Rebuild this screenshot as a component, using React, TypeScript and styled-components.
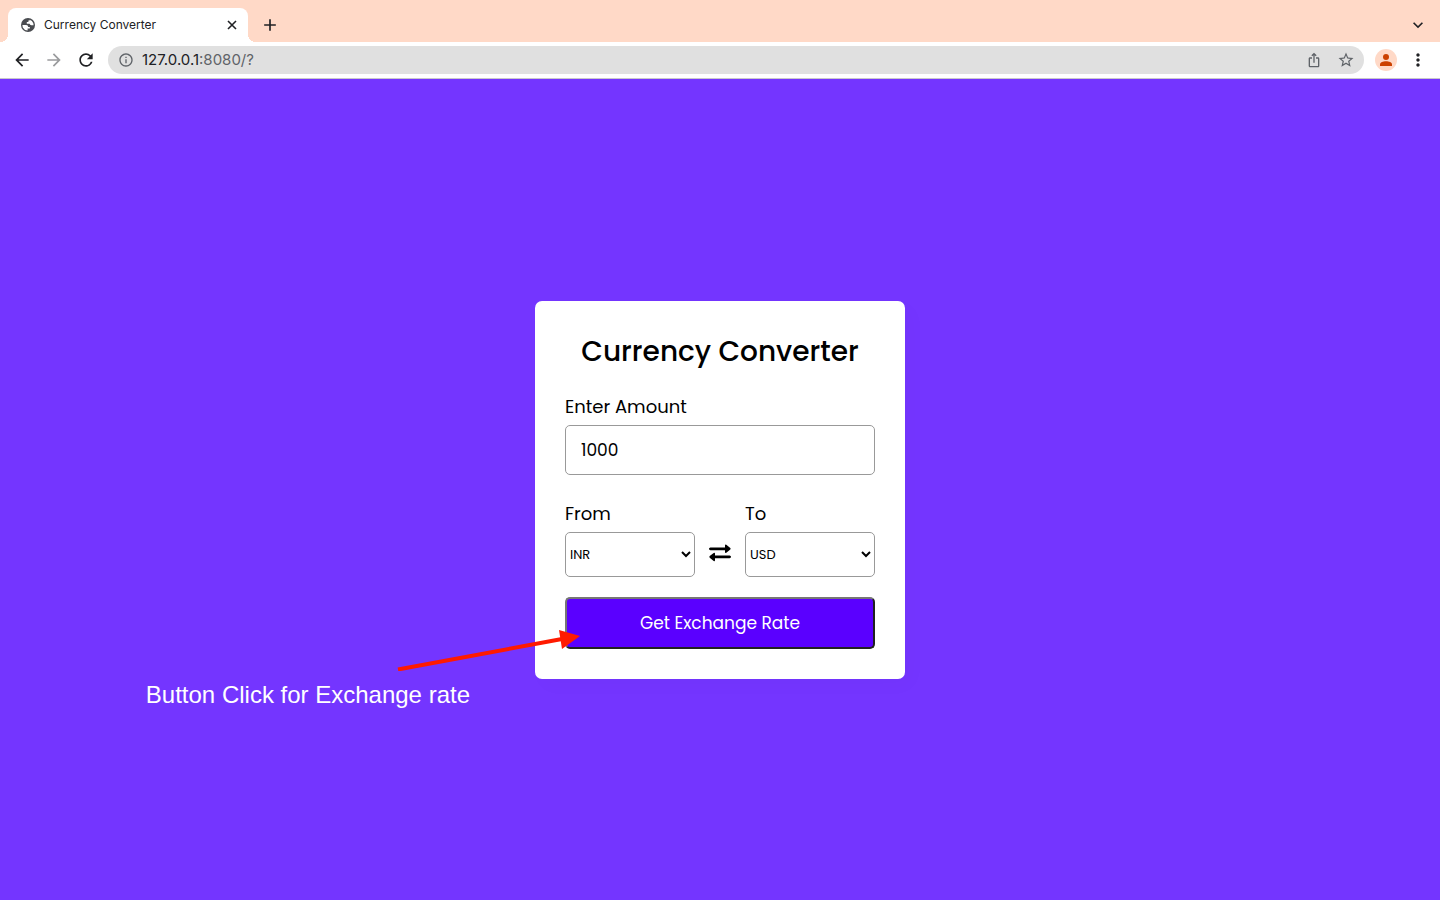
import React, { useState } from "react";
import styled, { createGlobalStyle } from "styled-components";
import {
  MdAdd,
  MdArrowBack,
  MdArrowForward,
  MdExpandMore,
  MdInfoOutline,
  MdIosShare,
  MdMoreVert,
  MdRefresh,
  MdStarBorder,
} from "react-icons/md";

const GlobalStyle = createGlobalStyle`
  * { box-sizing: border-box; margin: 0; padding: 0; }
  body { font-family: Poppins, Inter, "Liberation Sans", sans-serif; color: #000; }
`;

const Window = styled.div`
  display: flex;
  flex-direction: column;
  min-height: 100vh;
`;

const TabStrip = styled.header`
  display: flex;
  align-items: flex-end;
  height: 42px;
  padding: 0 10px 0 8px;
  background: #ffd9c7;
`;

const Tab = styled.div`
  position: relative;
  display: flex;
  align-items: center;
  width: 240px;
  height: 34px;
  padding: 0 8px 0 12px;
  border-radius: 8px 8px 0 0;
  background: #fff;
  color: #4a4c50;

  &::before,
  &::after {
    content: "";
    position: absolute;
    bottom: 0;
    width: 8px;
    height: 8px;
  }
  &::before {
    left: -8px;
    background: radial-gradient(circle at 0 0, transparent 8px, #fff 8px);
  }
  &::after {
    right: -8px;
    background: radial-gradient(circle at 100% 0, transparent 8px, #fff 8px);
  }
`;

const TabTitle = styled.span`
  flex: 1;
  margin-left: 8px;
  font: 12px/16px Inter, sans-serif;
  color: #202124;
`;

const IconButton = styled.button<{ $size: number; $color?: string }>`
  display: flex;
  align-items: center;
  justify-content: center;
  flex: none;
  width: ${(p) => p.$size}px;
  height: ${(p) => p.$size}px;
  border: 0;
  background: none;
  color: ${(p) => p.$color ?? "#202124"};
`;

const NewTab = styled.div`
  display: flex;
  align-items: center;
  flex: 1;
  justify-content: space-between;
  height: 34px;
  padding-left: 12px;
`;

const Toolbar = styled.nav`
  display: flex;
  align-items: center;
  height: 37px;
  padding: 0 12px;
  border-bottom: 1px solid #c8c6cc;
  background: #fff;
`;

const NavButtons = styled.div`
  display: flex;
  gap: 12px;
  margin-right: 12px;
`;

const AddressBar = styled.div`
  display: flex;
  align-items: center;
  flex: 1;
  height: 28px;
  padding: 0 8px 0 10px;
  border-radius: 14px;
  background: #e0e0e0;
  color: #5f6368;
`;

const Address = styled.span`
  flex: 1;
  margin-left: 8px;
  font: 15px/20px Inter, sans-serif;
  color: #5f6368;

  b { font-weight: 400; color: #202124; }
`;

const AddressActions = styled.div`
  display: flex;
  gap: 12px;
`;

const Avatar = styled.button`
  display: flex;
  align-items: center;
  justify-content: center;
  width: 22px;
  height: 22px;
  margin: 0 11px;
  border: 0;
  border-radius: 50%;
  background: #ffd9c7;
  color: #cc4100;
`;

const Page = styled.main`
  display: flex;
  flex: 1;
  align-items: center;
  justify-content: center;
  background: #7435ff;
`;

const Card = styled.section`
  position: relative;
  width: 370px;
  padding: 30px;
  border-radius: 7px;
  background: #fff;
  box-shadow: 7px 7px 20px rgba(0, 0, 0, 0.02);
`;

const Title = styled.h1`
  font-size: 28px;
  font-weight: 500;
  line-height: 42px;
  text-align: center;
  white-space: nowrap;
`;

const Form = styled.form`
  margin-top: 20px;
`;

const Label = styled.label`
  display: block;
  margin-bottom: 5px;
  font-size: 18px;
  line-height: 27px;
`;

const AmountInput = styled.input`
  display: block;
  width: 100%;
  height: 50px;
  padding: 0 15px;
  border: 1px solid #999;
  border-radius: 5px;
  outline: none;
  background: #fff;
  color: #000;
  font: inherit;
  font-size: 17px;
`;

const CurrencyRow = styled.div`
  display: flex;
  align-items: flex-end;
  justify-content: space-between;
  margin: 25px 0 20px;
`;

const Field = styled.div`
  width: 130px;
`;

const CurrencySelect = styled.select`
  display: block;
  width: 100%;
  height: 45px;
  border: 1px solid #999;
  border-radius: 5px;
  outline: none;
  background: #fff;
  color: #000;
  font: inherit;
  font-size: 13px;
`;

const SwapButton = styled.button`
  display: flex;
  align-items: center;
  height: 48px;
  border: 0;
  background: none;
  color: #000;
`;

const SubmitButton = styled.button`
  display: block;
  width: 100%;
  height: 52px;
  border: 2px solid;
  border-color: #767676 #212121 #212121 #767676;
  border-radius: 5px;
  background: #5a00ff;
  color: #fff;
  font: inherit;
  font-size: 17px;
`;

/* Callout laid over the page, hung from the card so that it keeps pointing at the button */
const Arrow = styled.svg`
  position: absolute;
  left: -138px;
  bottom: 8px;
  pointer-events: none;
`;

const Callout = styled.p`
  position: absolute;
  right: 435px;
  bottom: -30px;
  font: 24px/28px "Liberation Sans", Arial, sans-serif;
  color: #fff;
  white-space: nowrap;
`;

const currencies = ["INR", "USD", "EUR", "GBP", "JPY"];

function SwapIcon() {
  return (
    <svg width="22" height="18" viewBox="0 0 22 18" fill="currentColor" aria-hidden="true">
      <path d="M1.4 3.4H16V1.5Q16.1 0 17.3.7L21.3 3.9Q22 4.8 21.3 5.6L17.3 8.8Q16.1 9.5 16 8V6.2H1.4Q0 6.1 0 4.8 0 3.5 1.4 3.4Z" />
      <path d="M20.6 11.4H6V9.6Q5.9 8.2 4.7 8.9L.7 12.1Q0 12.9.7 13.7L4.7 17Q5.9 17.6 6 16.2V14.2H20.6Q22 14.1 22 12.8 22 11.5 20.6 11.4Z" />
    </svg>
  );
}

function GlobeIcon() {
  return (
    <svg width="16" height="16" viewBox="0 0 16 16" aria-hidden="true">
      <circle cx="8" cy="8" r="7" fill="#4a4c50" />
      <path
        d="M2.4 8.1H6.2Q8.1 8.3 8.2 10H9.8V11.6H7.6V13.4Q4.2 13.2 2.8 10.4ZM9.6 2.7Q12.4 3.6 13.3 6.2L13.6 8.2H11.4Q9.8 8.2 9.6 6.8H6.8V5H8.4V3.6H9.6Z"
        fill="#fff"
      />
    </svg>
  );
}

function CloseIcon() {
  return (
    <svg width="16" height="16" viewBox="0 0 16 16" aria-hidden="true">
      <path d="M4 4L12 12M12 4L4 12" stroke="currentColor" strokeWidth="1.6" />
    </svg>
  );
}

function PersonIcon() {
  return (
    <svg width="12" height="12" viewBox="0 0 12 12" fill="currentColor" aria-hidden="true">
      <circle cx="6" cy="3" r="3" />
      <path d="M0 12V10.5C0 8.5 3 7.3 6 7.3S12 8.5 12 10.5V12Z" />
    </svg>
  );
}

export default function App() {
  const [amount, setAmount] = useState("1000");
  const [from, setFrom] = useState("INR");
  const [to, setTo] = useState("USD");

  const swap = () => {
    setFrom(to);
    setTo(from);
  };

  return (
    <Window>
      <GlobalStyle />
      <TabStrip>
        <Tab>
          <GlobeIcon />
          <TabTitle>Currency Converter</TabTitle>
          <IconButton $size={16} aria-label="Close tab"><CloseIcon /></IconButton>
        </Tab>
        <NewTab>
          <IconButton $size={20} aria-label="New tab"><MdAdd size={20} /></IconButton>
          <IconButton $size={24} aria-label="Search tabs"><MdExpandMore size={20} /></IconButton>
        </NewTab>
      </TabStrip>
      <Toolbar>
        <NavButtons>
          <IconButton $size={20} aria-label="Back"><MdArrowBack size={20} /></IconButton>
          <IconButton $size={20} $color="#9a9b9d" aria-label="Forward"><MdArrowForward size={20} /></IconButton>
          <IconButton $size={20} aria-label="Reload"><MdRefresh size={20} /></IconButton>
        </NavButtons>
        <AddressBar>
          <MdInfoOutline size={16} />
          <Address><b>127.0.0.1</b>:8080/?</Address>
          <AddressActions>
            <IconButton $size={20} $color="#5f6368" aria-label="Share"><MdIosShare size={16} /></IconButton>
            <IconButton $size={20} $color="#5f6368" aria-label="Bookmark"><MdStarBorder size={18} /></IconButton>
          </AddressActions>
        </AddressBar>
        <Avatar aria-label="Profile"><PersonIcon /></Avatar>
        <IconButton $size={20} aria-label="Menu"><MdMoreVert size={20} /></IconButton>
      </Toolbar>
      <Page>
        <Card>
          <Title>Currency Converter</Title>
          <Form onSubmit={(e) => e.preventDefault()}>
            <Label htmlFor="amount">Enter Amount</Label>
            <AmountInput id="amount" type="text" value={amount} onChange={(e) => setAmount(e.target.value)} />
            <CurrencyRow>
              <Field>
                <Label htmlFor="from">From</Label>
                <CurrencySelect id="from" value={from} onChange={(e) => setFrom(e.target.value)}>
                  {currencies.map((c) => <option key={c}>{c}</option>)}
                </CurrencySelect>
              </Field>
              <SwapButton type="button" aria-label="Swap currencies" onClick={swap}><SwapIcon /></SwapButton>
              <Field>
                <Label htmlFor="to">To</Label>
                <CurrencySelect id="to" value={to} onChange={(e) => setTo(e.target.value)}>
                  {currencies.map((c) => <option key={c}>{c}</option>)}
                </CurrencySelect>
              </Field>
            </CurrencyRow>
            <SubmitButton type="submit">Get Exchange Rate</SubmitButton>
          </Form>
          <Arrow width="184" height="42" viewBox="0 0 184 42" aria-hidden="true">
            <path d="M1 40.5L165 10" stroke="#ff1a00" strokeWidth="4" />
            <path d="M162 1L183 7L165 20Z" fill="#ff1a00" />
          </Arrow>
          <Callout>Button Click for Exchange rate</Callout>
        </Card>
      </Page>
    </Window>
  );
}
